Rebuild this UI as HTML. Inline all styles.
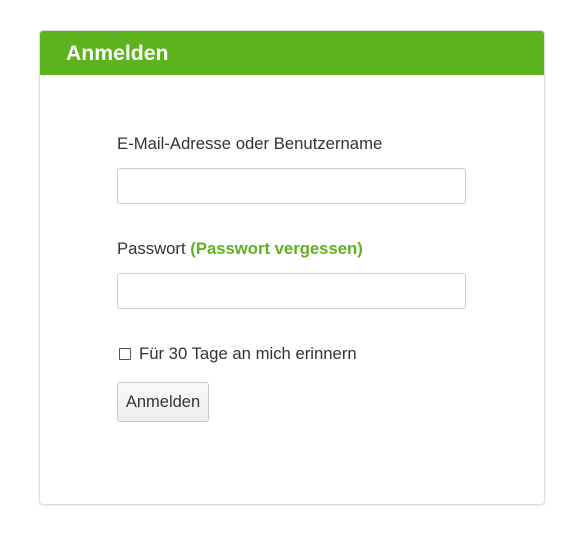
<!DOCTYPE html>
<html><head><style>
body{margin:0;background:#fff;font-family:"Liberation Sans",sans-serif;color:#333;}
.panel{position:absolute;left:39px;top:30px;width:504px;height:473px;border:1px solid #ddd;border-radius:4px;box-shadow:0 1px 2px rgba(0,0,0,.08);overflow:hidden}
.head{height:44px;background:#5db31e;color:#fff;font-weight:bold;font-size:21.2px;line-height:46px;padding-left:26px}
.t{position:absolute;font-size:16.7px;left:77px}
.in{position:absolute;left:77px;width:347px;height:34px;border:1px solid #ccc;border-radius:3px;background:#fff}
.g{color:#5db31e;font-weight:bold}
.cb{display:inline-block;width:10px;height:10px;border:1px solid #555;border-radius:1px;vertical-align:-1px;margin-right:8px}
.btn{position:absolute;left:77px;top:351px;width:90px;height:38px;border:1px solid #c8c8c8;border-radius:3px;background:linear-gradient(#fafafa,#ececec);font-size:16.5px;line-height:38px;text-align:center;color:#333}
</style></head><body>
<div class="panel">
<div class="head">Anmelden</div>
<div class="t" style="top:103px">E-Mail-Adresse oder Benutzername</div>
<div class="in" style="top:137px"></div>
<div class="t" style="top:208px">Passwort <span class="g">(Passwort vergessen)</span></div>
<div class="in" style="top:242px"></div>
<div class="t" style="top:313px;left:79px"><span class="cb"></span>Für 30 Tage an mich erinnern</div>
<div class="btn">Anmelden</div>
</div>
</body></html>
